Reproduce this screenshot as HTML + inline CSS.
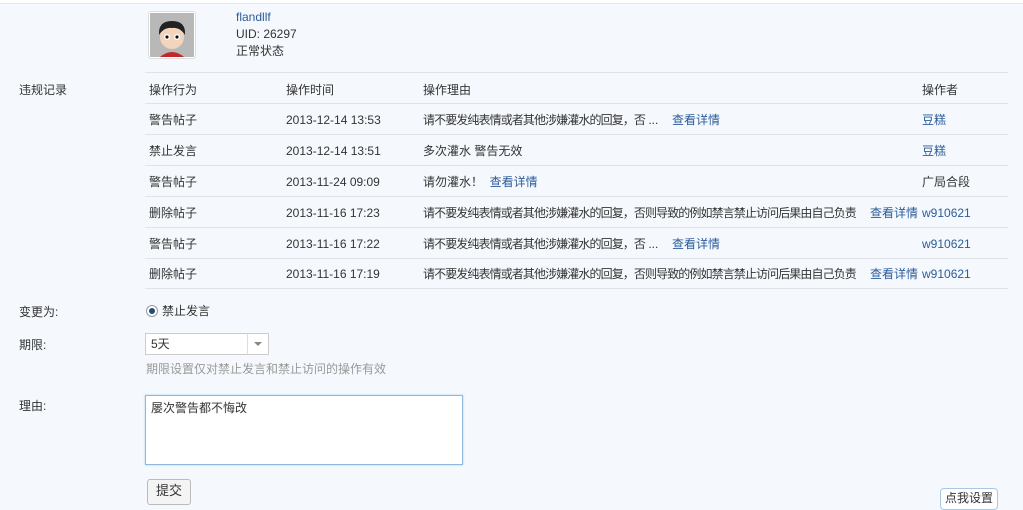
<!DOCTYPE html>
<html><head><meta charset="utf-8"><style>
body{margin:0;width:1023px;height:499px;overflow:hidden;background:#f5f9fd;font:12px/14px "Liberation Sans","Noto Sans CJK SC",sans-serif;color:#333;position:relative}
.a{position:absolute;white-space:nowrap}
.l{color:#2b5c9a}
.n{letter-spacing:-0.9px}
.hr{position:absolute;left:145px;width:863px;height:1px;background:#e0e4e8}
</style></head><body>
<div class="a" style="left:0;top:0;width:1023px;height:3px;background:#fff;border-bottom:1px solid #f5e9b0"></div>
<div class="a" style="left:148px;top:11px;width:46px;height:46px;border:1px solid #ddd;background:#fff;border-radius:3px">
<svg width="44" height="44" style="margin:1px"><rect width="44" height="44" fill="#b8b8b8"/><path d="M10 44 Q22 34 34 44Z" fill="#c0282a"/><ellipse cx="22" cy="24" rx="12" ry="12" fill="#f3d4bd"/><path d="M9 22 Q8 8 22 8 Q36 8 35 22 Q30 14 22 15 Q14 14 9 22Z" fill="#222"/><circle cx="17" cy="24" r="3" fill="#fff"/><circle cx="27" cy="24" r="3" fill="#fff"/><circle cx="17" cy="24" r="1.6" fill="#111"/><circle cx="27" cy="24" r="1.6" fill="#111"/></svg></div>
<div class="a l" style="left:236px;top:10px">flandllf</div>
<div class="a" style="left:236px;top:27px">UID: 26297</div>
<div class="a" style="left:236px;top:44px">正常状态</div>
<div class="a" style="left:19px;top:83px">违规记录</div>
<div class="hr" style="top:72px"></div>
<div class="hr" style="top:103px"></div>
<div class="hr" style="top:134px"></div>
<div class="hr" style="top:165px"></div>
<div class="hr" style="top:196px"></div>
<div class="hr" style="top:227px"></div>
<div class="hr" style="top:258px"></div>
<div class="hr" style="top:288px"></div>
<div class="a" style="left:149px;top:83px">操作行为</div><div class="a" style="left:286px;top:83px">操作时间</div><div class="a" style="left:423px;top:83px">操作理由</div><div class="a" style="left:922px;top:83px">操作者</div>

<div class="a" style="left:149px;top:113px">警告帖子</div><div class="a" style="left:286px;top:113px">2013-12-14 13:53</div><div class="a" style="left:423px;top:113px"><span class="n">请不要发纯表情或者其他涉嫌灌水的回复，否</span> ...</div><div class="a l" style="left:672px;top:113px">查看详情</div><div class="a l" style="left:922px;top:113px">豆糕</div>
<div class="a" style="left:149px;top:144px">禁止发言</div><div class="a" style="left:286px;top:144px">2013-12-14 13:51</div><div class="a" style="left:423px;top:144px">多次灌水 警告无效</div><div class="a l" style="left:922px;top:144px">豆糕</div>
<div class="a" style="left:149px;top:175px">警告帖子</div><div class="a" style="left:286px;top:175px">2013-11-24 09:09</div><div class="a" style="left:423px;top:175px">请勿灌水！&nbsp;&nbsp;<span class="l">查看详情</span></div><div class="a" style="left:922px;top:175px">广局合段</div>
<div class="a" style="left:149px;top:206px">删除帖子</div><div class="a" style="left:286px;top:206px">2013-11-16 17:23</div><div class="a n" style="left:423px;top:206px">请不要发纯表情或者其他涉嫌灌水的回复，否则导致的例如禁言禁止访问后果由自己负责</div><div class="a l" style="left:870px;top:206px">查看详情</div><div class="a l" style="left:922px;top:206px">w910621</div>
<div class="a" style="left:149px;top:237px">警告帖子</div><div class="a" style="left:286px;top:237px">2013-11-16 17:22</div><div class="a" style="left:423px;top:237px"><span class="n">请不要发纯表情或者其他涉嫌灌水的回复，否</span> ...</div><div class="a l" style="left:672px;top:237px">查看详情</div><div class="a l" style="left:922px;top:237px">w910621</div>
<div class="a" style="left:149px;top:267px">删除帖子</div><div class="a" style="left:286px;top:267px">2013-11-16 17:19</div><div class="a n" style="left:423px;top:267px">请不要发纯表情或者其他涉嫌灌水的回复，否则导致的例如禁言禁止访问后果由自己负责</div><div class="a l" style="left:870px;top:267px">查看详情</div><div class="a l" style="left:922px;top:267px">w910621</div>

<div class="a" style="left:19px;top:305px">变更为:</div>
<div class="a" style="left:146px;top:305px;width:10px;height:10px;border-radius:50%;border:1px solid #999;background:#fff"><div style="margin:2px;width:6px;height:6px;border-radius:50%;background:#1d4f7a"></div></div>
<div class="a" style="left:162px;top:304px">禁止发言</div>
<div class="a" style="left:19px;top:338px">期限:</div>
<div class="a" style="left:145px;top:333px;width:122px;height:20px;border:1px solid #ccc;background:#fff"><span style="position:absolute;left:5px;top:3px">5天</span><div style="position:absolute;left:101px;top:0;width:1px;height:20px;background:#ddd"></div><div style="position:absolute;left:108px;top:8px;border:4px solid transparent;border-top:4px solid #888;border-bottom:0"></div></div>
<div class="a" style="left:146px;top:362px;color:#999">期限设置仅对禁止发言和禁止访问的操作有效</div>
<div class="a" style="left:19px;top:399px">理由:</div>
<div class="a" style="left:145px;top:395px;width:316px;height:68px;border:1px solid #8fb8e0;box-shadow:0 0 2px #aad0f0;background:#fff"><span style="position:absolute;left:5px;top:5px">屡次警告都不悔改</span></div>
<div class="a" style="left:147px;top:479px;width:42px;height:24px;border:1px solid #bbb;border-radius:3px;background:#f4f4f4;text-align:center;line-height:22px;font-size:13px">提交</div>
<div class="a" style="left:940px;top:488px;width:56px;height:20px;border:1px solid #aac7e6;border-radius:4px;background:#fff;text-align:center;line-height:18px">点我设置</div>
</body></html>
